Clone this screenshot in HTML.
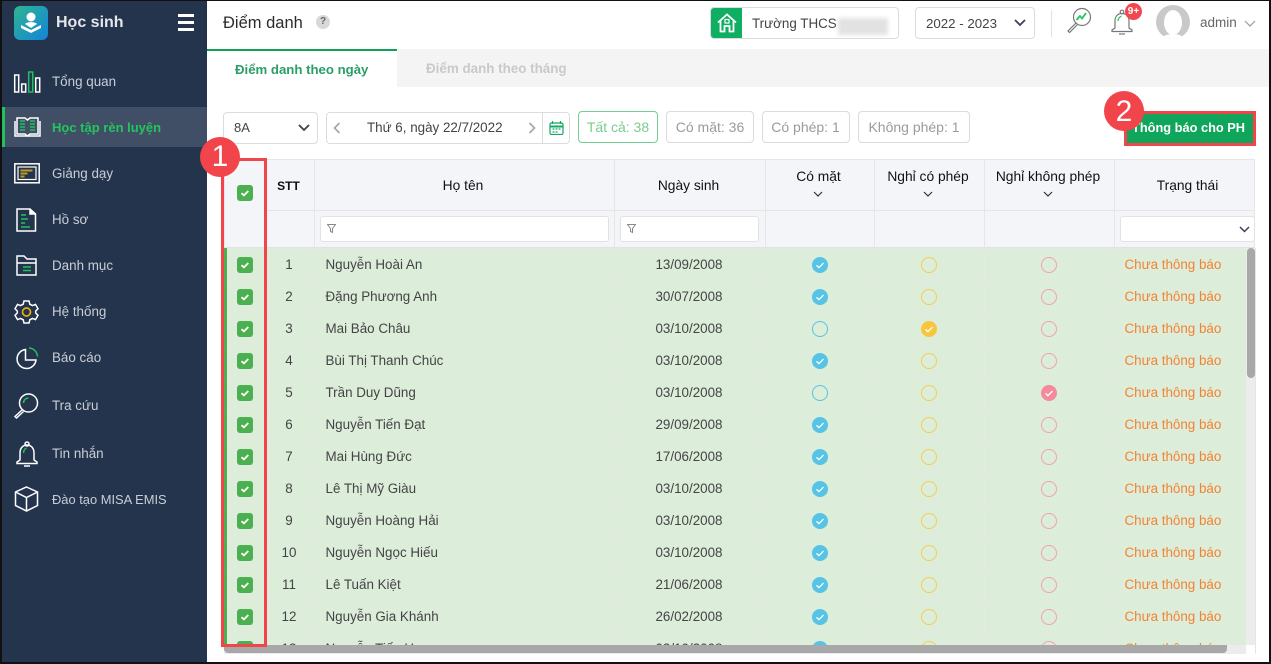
<!DOCTYPE html>
<html><head><meta charset="utf-8"><style>
*{box-sizing:border-box}
html,body{margin:0;padding:0;width:1271px;height:664px;overflow:hidden;background:#fff;font-family:"Liberation Sans",sans-serif;font-size:14px;color:#333}
.a{position:absolute;white-space:nowrap}
.nav{position:absolute;left:52px;color:#c9ced6;font-size:13.4px;line-height:20px;white-space:nowrap}
.ic{position:absolute;overflow:visible;fill:none;stroke:#fff;stroke-width:1.5}
.box{position:absolute;background:#fff;border:1px solid #dcdcdc;border-radius:4px;white-space:nowrap}
.pill{top:111px;height:32px;line-height:30px;text-align:center;color:#9b9b9b;font-size:14px}
.th{position:absolute;color:#111;text-align:center;font-size:13.8px;line-height:18px;white-space:nowrap}
.vl{position:absolute;top:159px;width:1px;height:89px;background:#e6e6e6}
.flt{position:absolute;top:216px;height:26px;background:#fff;border:1px solid #e2e2e2;border-radius:3px}
table{border-collapse:collapse;table-layout:fixed;width:1029px;position:absolute;left:-1px;top:0}
td{height:32px;padding:0 0 1px;background:#dcedda;border:1px solid #e8e8e8;text-align:center;font-size:13.4px;color:#444;white-space:nowrap;overflow:hidden}
td:first-child{border-left:4px solid #4caf50;padding:0 2px 0 0}
td:nth-child(2){padding-right:1px}
td:nth-child(3){text-align:left;padding-left:11px}
td:nth-child(4){padding-right:1px}
td:nth-child(5),td:nth-child(6),td:nth-child(7){padding:0}
td:nth-child(8){text-align:left;padding-left:10px;color:#f58233}
td svg{display:block;margin:0 auto;width:16px;height:16px}
</style></head><body>
<svg width="0" height="0" style="position:absolute"><defs>
<symbol id="k" viewBox="0 0 16 16"><rect width="16" height="16" rx="3" fill="#4caf50"/><path d="M4.5 8.2l2.4 2.2 4.4-4.4" fill="none" stroke="#fff" stroke-width="1.8"/></symbol>
<symbol id="b" viewBox="0 0 16 16"><circle cx="8" cy="8" r="8" fill="#55c4e6"/><path d="M4.5 8.4l2.4 2.3 4.6-4.6" fill="none" stroke="#fff" stroke-width="1.3"/></symbol>
<symbol id="o" viewBox="0 0 16 16"><circle cx="8" cy="8" r="7.5" fill="none" stroke="#55c4e6"/></symbol>
<symbol id="y" viewBox="0 0 16 16"><circle cx="8" cy="8" r="7.5" fill="none" stroke="#f6cb52"/></symbol>
<symbol id="Y" viewBox="0 0 16 16"><circle cx="8" cy="8" r="8" fill="#f8c63d"/><path d="M4.5 8.4l2.4 2.3 4.6-4.6" fill="none" stroke="#fff" stroke-width="1.3"/></symbol>
<symbol id="r" viewBox="0 0 16 16"><circle cx="8" cy="8" r="7.5" fill="none" stroke="#f5a0a8"/></symbol>
<symbol id="R" viewBox="0 0 16 16"><circle cx="8" cy="8" r="8" fill="#f58a9c"/><path d="M4.5 8.4l2.4 2.3 4.6-4.6" fill="none" stroke="#fff" stroke-width="1.3"/></symbol>
<linearGradient id="lg" x1="0" y1="0" x2="1" y2="1"><stop offset="0" stop-color="#2fb58f"/><stop offset="1" stop-color="#1383dc"/></linearGradient>
</defs></svg>

<!-- sidebar -->
<div class="a" style="left:2px;top:0;width:205px;height:664px;background:#24344d"></div>
<svg class="a" style="left:14px;top:6px" width="34" height="34" viewBox="0 0 34 34"><rect width="34" height="34" rx="6" fill="url(#lg)"/><circle cx="17" cy="11" r="4.5" fill="#fff"/><path d="M11 18c2-2.500 10-2.500 12 0l-6 4z" fill="#fff"/><path d="M7 19l10 5 10-5v3l-10 5-10-5z" fill="#fff"/></svg>
<div class="a" style="left:56px;top:13px;font-size:16px;line-height:20px;font-weight:bold;color:#e4e7eb">Học sinh</div>
<div class="a" style="left:178px;top:14px;width:16px;height:2.500px;background:#fff"></div>
<div class="a" style="left:178px;top:21px;width:16px;height:2.500px;background:#fff"></div>
<div class="a" style="left:178px;top:28px;width:16px;height:2.500px;background:#fff"></div>
<div class="a" style="left:2px;top:107px;width:205px;height:40px;background:#414f66"></div>
<div class="a" style="left:2px;top:107px;width:3px;height:40px;background:#1fc15f"></div>

<svg class="ic" style="left:14px;top:71px" width="27" height="22"><rect x=".7" y="4" width="4" height="17"/><rect x="7.700" y="13" width="4" height="8"/><rect x="14.700" y="1" width="4" height="20" stroke="#1fc15f"/><rect x="21.700" y="7" width="4" height="14"/></svg>
<div class="nav" style="top:72px">Tổng quan</div>
<svg class="ic" style="left:14px;top:116px" width="27" height="22"><path d="M3 2h8l2.500 2 2.500-2h8v16h-8l-2.500 2-2.500-2H3z"/><path d="M1 5v15h25V5"/><path d="M6 5h5M6 8h5M6 11h5M6 14h5M16 5h5M16 8h5M16 11h5M16 14h5" stroke="#1fc15f" stroke-width="1.600"/></svg>
<div class="nav" style="top:118px;color:#22c55e;font-weight:bold;font-size:13px">Học tập rèn luyện</div>
<svg class="ic" style="left:14px;top:163px" width="26" height="21"><rect x=".8" y=".8" width="24.400" height="19" stroke-width="1.500"/><rect x="4" y="4" width="18" height="12.500" stroke-width="1.200"/><path d="M6.500 7.500h12M6.500 10.500h7M6.500 13.500h4" stroke="#c39a1e" stroke-width="2"/></svg>
<div class="nav" style="top:164px">Giảng dạy</div>
<svg class="ic" style="left:16px;top:208px" width="21" height="24"><path d="M1 1h13l5.500 5v17H1z"/><path d="M14 1v5h5.500" fill="#fff"/><path d="M5 7h5M5 11h7M5 15h4M5 19h9" stroke="#1fc15f" stroke-width="1.500"/></svg>
<div class="nav" style="top:210px">Hồ sơ</div>
<svg class="ic" style="left:16px;top:255px" width="22" height="21"><path d="M1 20V1h7l3 3h9v16z"/><path d="M1 8h19"/><path d="M7 12h8M7 15.500h8" stroke="#1fc15f" stroke-width="1.500"/></svg>
<div class="nav" style="top:256px">Danh mục</div>
<svg class="ic" style="left:14px;top:300px" width="25" height="24" viewBox="0 0 25 24"><path d="M10 1h5l.8 3.200 2.700 1.400 3-1.200 2.500 4.300-2.300 2.300v2l2.300 2.300-2.500 4.300-3-1.200-2.700 1.400L15 23h-5l-.8-3.200-2.700-1.400-3 1.200L1 15.300l2.300-2.300v-2L1 8.700l2.500-4.300 3 1.200 2.700-1.400z"/><circle cx="12.500" cy="12" r="4" stroke="#e6b113" stroke-width="1.700"/></svg>
<div class="nav" style="top:302px">Hệ thống</div>
<svg class="ic" style="left:16px;top:347px" width="23" height="23"><path d="M9.500 2.500a9.500 9.500 0 1 0 10.500 10.500h-10.500z"/><path d="M13 1a9 9 0 0 1 8.500 8.500" stroke="#1fc15f"/></svg>
<div class="nav" style="top:348px">Báo cáo</div>
<svg class="ic" style="left:13px;top:393px" width="26" height="27"><circle cx="15.500" cy="10" r="9"/><path d="M10.500 10a5 5 0 0 1 5-5" stroke="#1fc15f"/><path d="M9 17l-7 6.500 1.500 1.500 7-6.500"/></svg>
<div class="nav" style="top:396px">Tra cứu</div>
<svg class="ic" style="left:15px;top:441px" width="24" height="26"><circle cx="12" cy="3" r="2"/><path d="M5 19V12c0-5 3-8 7-8s7 3 7 8v7l3 2v1.500H2V21z"/><path d="M9 25h6"/><path d="M8.500 12c0-2.500 1-4 3-5" stroke="#1fc15f"/></svg>
<div class="nav" style="top:444px">Tin nhắn</div>
<svg class="ic" style="left:14px;top:486px" width="25" height="26"><path d="M12.500 1l11 5v13.500l-11 5.500-11-5.500V6z"/><path d="M1.500 6l11 5.500 11-5.500M12.500 11.500V25"/></svg>
<div class="nav" style="top:490px;font-size:12.900px">Đào tạo MISA EMIS</div>

<!-- header -->
<div class="a" style="left:207px;top:0;width:1064px;height:49px;background:#fff;box-shadow:0 1px 4px rgba(0,0,0,.12)"></div>
<div class="a" style="left:223px;top:13px;font-size:16.500px;line-height:20px;color:#2c2c2c">Điểm danh</div>
<div class="a" style="left:316px;top:15px;width:14px;height:14px;border-radius:50%;background:#d8d8d8;color:#666;font-size:10px;font-weight:bold;line-height:14px;text-align:center">?</div>
<div class="box" style="left:710px;top:7px;width:189px;height:32px"></div>
<div class="a" style="left:711px;top:8px;width:31px;height:30px;background:#0fae62;border-radius:3px 0 0 3px"></div>
<svg class="a" style="left:717px;top:13px;fill:none;stroke:#fff;stroke-width:1.800" width="20" height="20"><path d="M1 9.500L10 1.500l9 8"/><path d="M3.500 8v10.500h4V13h5v5.500h4V8"/><rect x="8" y="6.500" width="4" height="3.500" stroke-width="1.200"/></svg>
<div class="a" style="left:752px;top:15px;font-size:13.400px;line-height:17px;color:#444">Trường THCS</div>
<div class="a" style="left:838px;top:18px;width:50px;height:17px;background:#e2e2e2;filter:blur(2px)"></div>
<div class="box" style="left:915px;top:7px;width:120px;height:32px"></div>
<div class="a" style="left:926px;top:15px;font-size:13.300px;line-height:17px;color:#444">2022 - 2023</div>
<svg class="a" style="left:1014px;top:19px;fill:none;stroke:#3c4058;stroke-width:1.800" width="12" height="8"><path d="M1 1l5 5 5-5"/></svg>
<div class="a" style="left:1051px;top:10px;width:1px;height:27px;background:#e2e2e2"></div>
<svg class="a" style="left:1066px;top:7px;fill:none;stroke:#777;stroke-width:1.200" width="27" height="27"><circle cx="16" cy="10" r="8.500"/><path d="M10 16l-8 8 1.500 1.500 8-8"/><path d="M10.500 13l3.500-4 2 2.500 4-5.500" stroke="#22c55e" stroke-width="1.800"/></svg>
<svg class="a" style="left:1110px;top:8px;fill:none;stroke:#777;stroke-width:1.200" width="25" height="28"><circle cx="12" cy="4" r="1.800"/><path d="M5 20v-7c0-5 3-7.500 7-7.500s7 2.500 7 7.500v7l3 2v1.500H2V22z"/><path d="M9 26h6"/><path d="M8 13c0-2.500 1.500-4 3.500-5" stroke="#22c55e"/></svg>
<div class="a" style="left:1125px;top:3px;width:17px;height:17px;border-radius:50%;background:#f2474f;color:#fff;font-size:10px;font-weight:bold;line-height:17px;text-align:center">9+</div>
<div class="a" style="left:1156px;top:5px;width:34px;height:34px;border-radius:50%;background:#c9c9c9;overflow:hidden"><div style="position:absolute;left:8px;top:5px;width:18px;height:25px;border-radius:50%;background:#fff"></div><div style="position:absolute;left:6px;top:29px;width:22px;height:10px;background:#fff;border-radius:50%"></div></div>
<div class="a" style="left:1200px;top:14px;font-size:13.500px;line-height:17px;color:#666">admin</div>
<svg class="a" style="left:1244px;top:20px;fill:none;stroke:#999;stroke-width:1.200" width="12" height="7"><path d="M1 1l5 5 5-5"/></svg>

<!-- tabs -->
<div class="a" style="left:207px;top:49px;width:1064px;height:38px;background:#f4f4f4"></div>
<div class="a" style="left:207px;top:49px;width:190px;height:38px;background:#fff;border-top:2px solid #10a058"></div>
<div class="a" style="left:235px;top:61px;font-size:13.200px;line-height:17px;font-weight:bold;color:#2a9e68">Điểm danh theo ngày</div>
<div class="a" style="left:426px;top:60px;font-size:13.400px;line-height:17px;font-weight:bold;color:#c9c9c9">Điểm danh theo tháng</div>

<!-- toolbar -->
<div class="box" style="left:223px;top:112px;width:95px;height:32px"></div>
<div class="a" style="left:234px;top:120px;font-size:13px;line-height:16px;color:#444">8A</div>
<svg class="a" style="left:298px;top:124px;fill:none;stroke:#3c4058;stroke-width:1.800" width="12" height="8"><path d="M1 1l5 5 5-5"/></svg>
<div class="box" style="left:326px;top:112px;width:244px;height:32px"></div>
<div class="a" style="left:542px;top:113px;width:1px;height:30px;background:#dcdcdc"></div>
<svg class="a" style="left:333px;top:122px;fill:none;stroke:#aaa;stroke-width:1.800" width="8" height="12"><path d="M6.500 1l-5 5 5 5"/></svg>
<svg class="a" style="left:528px;top:122px;fill:none;stroke:#aaa;stroke-width:1.800" width="8" height="12"><path d="M1.500 1l5 5-5 5"/></svg>
<div class="a" style="left:367px;top:120px;font-size:13.400px;line-height:16px;color:#444">Thứ 6, ngày 22/7/2022</div>
<svg class="a" style="left:549px;top:121px;fill:none;stroke:#16a866;stroke-width:1.200" width="15" height="14"><rect x="1" y="2" width="13" height="11.500" rx="1.500"/><path d="M1 5.500h13" stroke-width="2"/><path d="M3.500 0v3M11.500 0v3"/><path d="M3.500 8h8M3.500 11h6" stroke-dasharray="2 1"/></svg>
<div class="box pill" style="left:578px;width:80px;border-color:#6fd08f;color:#7acb90">Tất cả: 38</div>
<div class="box pill" style="left:666px;width:88px">Có mặt: 36</div>
<div class="box pill" style="left:762px;width:88px;padding-right:1px">Có phép: 1</div>
<div class="box pill" style="left:858px;width:112px">Không phép: 1</div>
<div class="a" style="left:1124px;top:111px;width:132px;height:35px;background:#0fa65c;border:3px solid #f1454b;color:#fff;font-weight:bold;font-size:12.800px;line-height:28px;padding-left:5px">Thông báo cho PH</div>

<!-- table head -->
<div class="a" style="left:224px;top:159px;width:1031px;height:89px;background:#f3f5f9;border:1px solid #e6e6e6;border-bottom:1px solid #e2e2e2"></div>
<div class="a" style="left:265px;top:210px;width:990px;height:1px;background:#e6e6e6"></div>
<div class="vl" style="left:314px"></div><div class="vl" style="left:614px"></div><div class="vl" style="left:765px"></div><div class="vl" style="left:874px"></div><div class="vl" style="left:984px"></div><div class="vl" style="left:1114px"></div>
<svg class="a" style="left:237px;top:185px" width="16" height="16"><use href="#k"/></svg>
<div class="th" style="left:265px;width:47px;top:177px;font-weight:bold;font-size:12px">STT</div>
<div class="th" style="left:314px;width:298px;top:177px">Họ tên</div>
<div class="th" style="left:614px;width:149px;top:177px">Ngày sinh</div>
<div class="th" style="left:765px;width:107px;top:168px">Có mặt</div>
<div class="th" style="left:874px;width:108px;top:168px">Nghỉ có phép</div>
<div class="th" style="left:984px;width:128px;top:168px">Nghỉ không phép</div>
<div class="th" style="left:1114px;width:147px;top:177px">Trạng thái</div>
<svg class="a" style="left:813px;top:191px;fill:none;stroke:#333;stroke-width:1.200" width="10" height="6"><path d="M1 1l4 4 4-4"/></svg>
<svg class="a" style="left:923px;top:191px;fill:none;stroke:#333;stroke-width:1.200" width="10" height="6"><path d="M1 1l4 4 4-4"/></svg>
<svg class="a" style="left:1043px;top:191px;fill:none;stroke:#333;stroke-width:1.200" width="10" height="6"><path d="M1 1l4 4 4-4"/></svg>
<div class="flt" style="left:320px;width:289px"></div>
<div class="flt" style="left:620px;width:139px"></div>
<div class="flt" style="left:1120px;width:135px"></div>
<svg class="a" style="left:327px;top:224px;fill:none;stroke:#888" width="9" height="10"><path d="M.5.500h8L5.500 4.500v4l-2-1v-3z"/></svg>
<svg class="a" style="left:627px;top:224px;fill:none;stroke:#888" width="9" height="10"><path d="M.5.500h8L5.500 4.500v4l-2-1v-3z"/></svg>
<svg class="a" style="left:1239px;top:226px;fill:none;stroke:#3c4058;stroke-width:1.500" width="11" height="7"><path d="M1 1l4.500 4.500L10 1"/></svg>

<!-- rows -->
<div class="a" style="left:224px;top:248px;width:1022px;height:397px;overflow:hidden">
<table><colgroup><col style="width:40px"><col style="width:49px"><col style="width:300px"><col style="width:151px"><col style="width:109px"><col style="width:110px"><col style="width:130px"><col style="width:141px"></colgroup>
<tr><td><svg><use href="#k"/></svg></td><td>1</td><td>Nguyễn Hoài An</td><td>13/09/2008</td><td><svg><use href="#b"/></svg></td><td><svg><use href="#y"/></svg></td><td><svg><use href="#r"/></svg></td><td>Chưa thông báo</td></tr>
<tr><td><svg><use href="#k"/></svg></td><td>2</td><td>Đặng Phương Anh</td><td>30/07/2008</td><td><svg><use href="#b"/></svg></td><td><svg><use href="#y"/></svg></td><td><svg><use href="#r"/></svg></td><td>Chưa thông báo</td></tr>
<tr><td><svg><use href="#k"/></svg></td><td>3</td><td>Mai Bảo Châu</td><td>03/10/2008</td><td><svg><use href="#o"/></svg></td><td><svg><use href="#Y"/></svg></td><td><svg><use href="#r"/></svg></td><td>Chưa thông báo</td></tr>
<tr><td><svg><use href="#k"/></svg></td><td>4</td><td>Bùi Thị Thanh Chúc</td><td>03/10/2008</td><td><svg><use href="#b"/></svg></td><td><svg><use href="#y"/></svg></td><td><svg><use href="#r"/></svg></td><td>Chưa thông báo</td></tr>
<tr><td><svg><use href="#k"/></svg></td><td>5</td><td>Trần Duy Dũng</td><td>03/10/2008</td><td><svg><use href="#o"/></svg></td><td><svg><use href="#y"/></svg></td><td><svg><use href="#R"/></svg></td><td>Chưa thông báo</td></tr>
<tr><td><svg><use href="#k"/></svg></td><td>6</td><td>Nguyễn Tiến Đạt</td><td>29/09/2008</td><td><svg><use href="#b"/></svg></td><td><svg><use href="#y"/></svg></td><td><svg><use href="#r"/></svg></td><td>Chưa thông báo</td></tr>
<tr><td><svg><use href="#k"/></svg></td><td>7</td><td>Mai Hùng Đức</td><td>17/06/2008</td><td><svg><use href="#b"/></svg></td><td><svg><use href="#y"/></svg></td><td><svg><use href="#r"/></svg></td><td>Chưa thông báo</td></tr>
<tr><td><svg><use href="#k"/></svg></td><td>8</td><td>Lê Thị Mỹ Giàu</td><td>03/10/2008</td><td><svg><use href="#b"/></svg></td><td><svg><use href="#y"/></svg></td><td><svg><use href="#r"/></svg></td><td>Chưa thông báo</td></tr>
<tr><td><svg><use href="#k"/></svg></td><td>9</td><td>Nguyễn Hoàng Hải</td><td>03/10/2008</td><td><svg><use href="#b"/></svg></td><td><svg><use href="#y"/></svg></td><td><svg><use href="#r"/></svg></td><td>Chưa thông báo</td></tr>
<tr><td><svg><use href="#k"/></svg></td><td>10</td><td>Nguyễn Ngọc Hiếu</td><td>03/10/2008</td><td><svg><use href="#b"/></svg></td><td><svg><use href="#y"/></svg></td><td><svg><use href="#r"/></svg></td><td>Chưa thông báo</td></tr>
<tr><td><svg><use href="#k"/></svg></td><td>11</td><td>Lê Tuấn Kiệt</td><td>21/06/2008</td><td><svg><use href="#b"/></svg></td><td><svg><use href="#y"/></svg></td><td><svg><use href="#r"/></svg></td><td>Chưa thông báo</td></tr>
<tr><td><svg><use href="#k"/></svg></td><td>12</td><td>Nguyễn Gia Khánh</td><td>26/02/2008</td><td><svg><use href="#b"/></svg></td><td><svg><use href="#y"/></svg></td><td><svg><use href="#r"/></svg></td><td>Chưa thông báo</td></tr>
<tr><td><svg><use href="#k"/></svg></td><td>13</td><td>Nguyễn Tiến Hưng</td><td>03/10/2008</td><td><svg><use href="#b"/></svg></td><td><svg><use href="#y"/></svg></td><td><svg><use href="#r"/></svg></td><td>Chưa thông báo</td></tr>
</table></div>

<!-- scrollbars -->
<div class="a" style="left:1246px;top:248px;width:9px;height:397px;background:#ececec"></div>
<div class="a" style="left:1247px;top:248px;width:8px;height:130px;background:#a8a8a8;border-radius:4px"></div>
<div class="a" style="left:224px;top:645px;width:1022px;height:9px;background:#ececec"></div>
<div class="a" style="left:224px;top:645px;width:1003px;height:8px;background:#a8a8a8;border-radius:0 0 4px 4px"></div>
<div class="a" style="left:1255px;top:248px;width:1px;height:406px;background:#e6e6e6"></div>

<!-- annotations -->
<div class="a" style="left:221px;top:158px;width:46px;height:489px;border:3px solid #f1454b"></div>
<div class="a" style="left:200px;top:137px;width:40px;height:40px;border-radius:50%;background:#f1454b;color:#fff;font-size:30px;line-height:40px;text-align:center">1</div>
<div class="a" style="left:1104px;top:91px;width:40px;height:40px;border-radius:50%;background:#f1454b;color:#fff;font-size:30px;line-height:41px;text-align:center">2</div>

<!-- frame -->
<div class="a" style="left:0;top:0;width:1271px;height:1px;background:#111"></div>
<div class="a" style="left:0;top:662px;width:1271px;height:2px;background:#111"></div>
<div class="a" style="left:0;top:0;width:2px;height:664px;background:#111"></div>
<div class="a" style="left:1269px;top:0;width:2px;height:664px;background:#111"></div>
</body></html>
